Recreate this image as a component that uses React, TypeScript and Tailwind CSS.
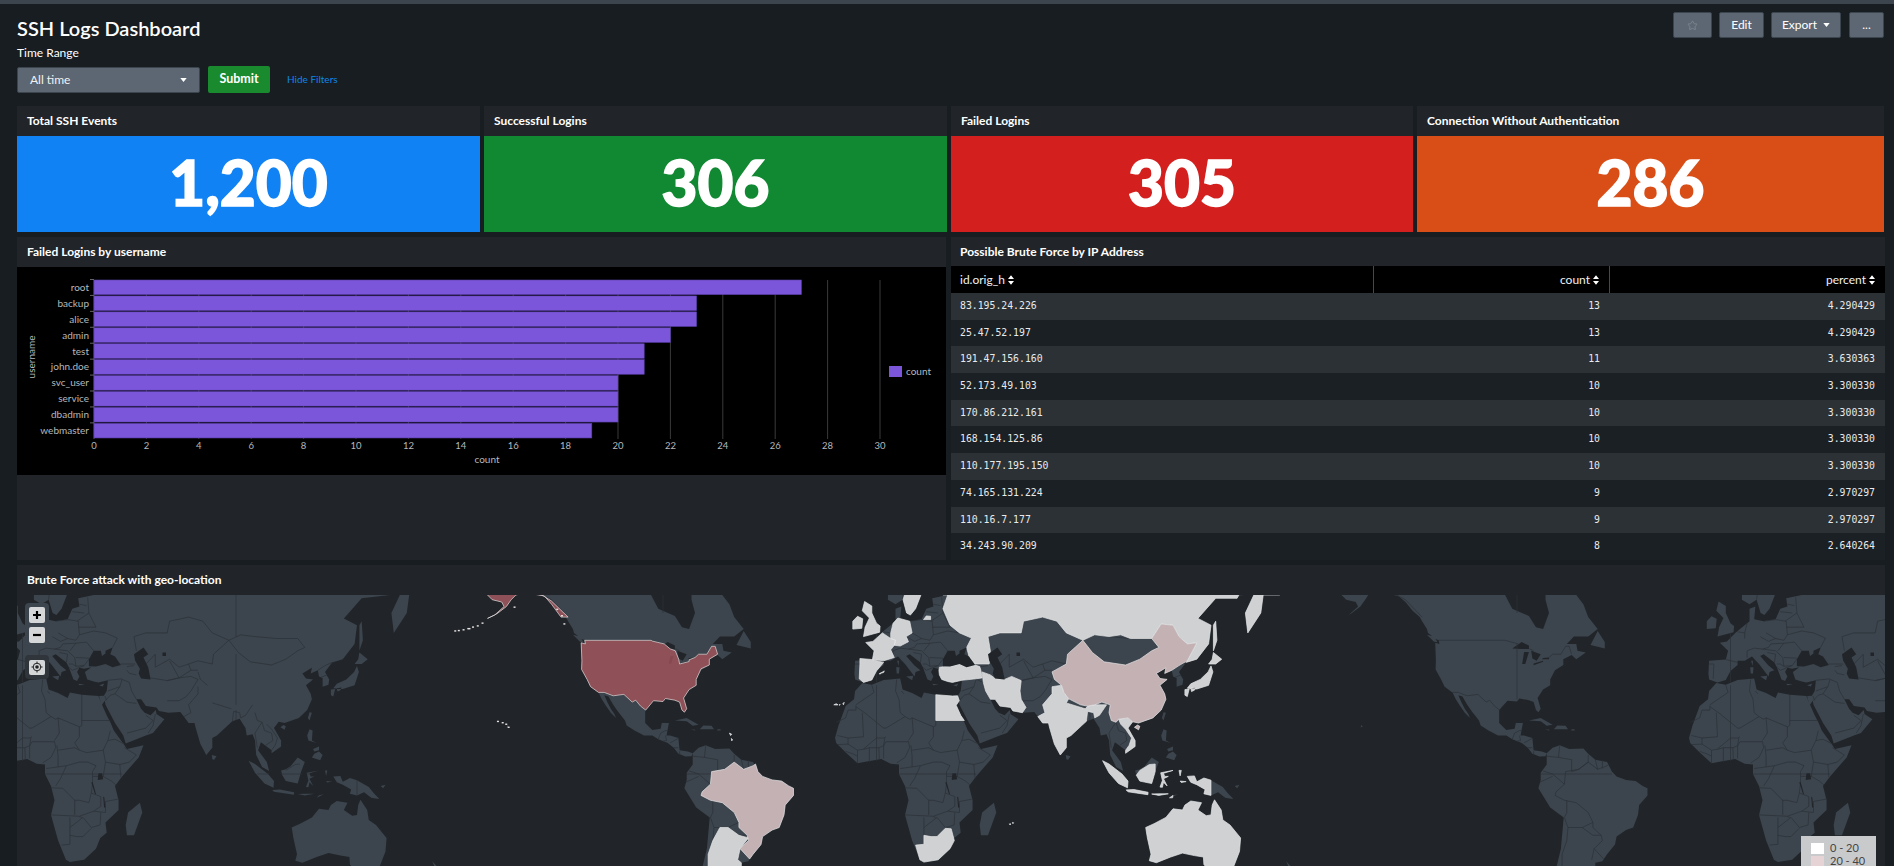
import { Star } from "lucide-react";

type Pt = [number, number];
const WORLD = 854;
const px = (lng: number) => 449.5 + (lng + 180) * (WORLD / 360);
const py = (lat: number) => 774 - 135.9 * Math.log(Math.tan(Math.PI / 4 + (lat * Math.PI) / 360));
const path = (pts: Pt[], close = true) =>
  "M" + pts.map(([a, b]) => `${px(a).toFixed(1)} ${py(b).toFixed(1)}`).join("L") + (close ? "Z" : "");

const land: Pt[][] = [
  // North America
  [[-170,72],[-166,62],[-165,60.5],[-162,59],[-158,58.5],[-157,57.5],[-161,55.5],[-164,54.7],[-160,55.8],[-156,57.5],[-154,59],[-152,60.5],[-150,60],[-148,60.5],[-145,60.3],[-140,59.8],[-137,58.5],[-134,56.5],[-131,55],[-130,54],[-128,52],[-127.5,51],[-124,49.3],[-123,49],[-122.7,48],[-124.5,48.3],[-124.2,43],[-124.3,40.3],[-122,37],[-120.5,34.5],[-117.2,32.5],[-115.8,30],[-114,27.5],[-112,25],[-109.8,23],[-110.5,24.5],[-112,26.5],[-113.5,29],[-114.7,31.5],[-113,31],[-111,28],[-109,25.5],[-106,22],[-105.3,20],[-102,18],[-98,16],[-94.5,16],[-92,14.5],[-88,13],[-85.5,11],[-83.5,8.5],[-80.5,7.3],[-78,7.5],[-77.5,8.7],[-79.5,9.5],[-83,10],[-83.5,15],[-87,16],[-88.5,16],[-87.5,21],[-90.5,21],[-91,18.7],[-94.5,18.2],[-97.5,21],[-97.5,26],[-94,29.5],[-90,29.2],[-89,30.3],[-85,29.7],[-83,29],[-82,26],[-81,25.2],[-80,26.5],[-81.3,30.5],[-79,33.5],[-76,35],[-76,37],[-74,40],[-70.5,41.7],[-70.5,43.5],[-67,44.8],[-65,43.5],[-61,45.5],[-64.5,46],[-65,48],[-69,48],[-66,50],[-60,50],[-56,52],[-60,55],[-62,58],[-65,60],[-70,61],[-78,62],[-78,59],[-76.5,56],[-79,52],[-82,52.5],[-85,55.3],[-92,57],[-95,60],[-94,62],[-100,72]],
  // South America
  [[-77.5,8.7],[-75,11],[-72,12],[-68,10.5],[-62,10.7],[-60,8.5],[-57,6],[-52,5],[-50,1],[-48,-1],[-44,-2.5],[-40,-3],[-37,-5],[-35,-6],[-35,-9],[-38.5,-13],[-39,-17],[-41,-22],[-44,-23],[-48,-25.5],[-48.7,-28.5],[-52,-32],[-54,-34.5],[-57,-35],[-57,-38],[-62,-39],[-72,-39],[-73.5,-37],[-71.5,-30],[-70.3,-18],[-76,-14],[-81,-6],[-80,-2.5],[-80,0.5],[-77.5,4],[-77.5,7]],
  // Africa
  [[-6,35.8],[-2,35.2],[3,36.8],[10,37.3],[11,33.5],[15,32.3],[19,30.5],[20,32.5],[25,31.7],[32,31.2],[32.5,30],[35.5,24],[37.2,21],[38.5,18],[43,12],[44,10.5],[51,12],[49,7],[42,-1],[39,-5],[40.5,-11],[40.5,-15],[35,-20],[35.5,-24],[32.8,-26],[31,-30],[26,-34],[20,-34.8],[18.3,-34],[15,-27],[12,-17],[13.5,-11],[12,-5],[9.5,0],[9.5,4],[6,4.3],[2,6.3],[-4,5.2],[-8,4.5],[-13,9],[-17,13],[-17.5,15],[-16,20],[-13,27.5],[-9.5,30],[-9,33]],
  // Eurasia
  [[-9,37],[-9.3,39],[-9,43],[-2,43.4],[-1,46],[-4.5,48.3],[-1.5,48.7],[2,51],[4,52],[8,54],[8,57],[10.5,57.5],[10,54.5],[14,54],[19,54.5],[21,57],[24,57.5],[23.5,59.3],[30,60],[23,60],[21.5,61],[21.5,70],[180,70],[180,65],[170,60],[163,60],[162,56],[156.5,51],[155.5,56],[160,61],[155,60],[143,59.3],[135.5,54.7],[141,53],[140,48],[135,43.5],[130.5,42.5],[127.5,39.5],[129.3,37],[129,35.2],[126.5,34.5],[126.5,37.5],[125,38],[124.5,40],[121.5,39],[122,40.8],[118,39],[119.5,37.3],[122.5,37],[119.5,35],[121.5,32],[122,30],[120,26],[116.5,23],[110.5,21],[108,21.5],[106,19],[109,14],[109,11.5],[105,8.7],[105,10],[100.5,13.3],[99.3,10],[103,5],[104,1.3],[101,3],[98.5,8],[98,14],[97,16.5],[94.5,16],[94,19],[91.5,22.7],[88.5,21.7],[86.5,20],[82,16],[80,15],[80,11],[77.5,8],[75,12.5],[73,19],[72.5,21],[70,21],[68,23.5],[66.5,25.3],[61.5,25],[57.5,25.7],[56.5,27],[52,27.5],[50,30],[48,30],[50,26.5],[51.5,25],[54,24],[56.2,26],[56.5,24.5],[59.8,22.5],[55,17],[52,16],[43.5,12.7],[42.5,16],[39,21],[35,28],[34.7,29.5],[33.5,28],[32.6,30],[32.3,31.2],[34.3,31.3],[35.5,33],[36,36.7],[32,36],[30,36.3],[27.3,37],[26.3,39.5],[29,41],[26,40.5],[24,40.8],[23,39.5],[24,38],[23,36.5],[21.5,37],[19.5,41],[18.5,42.5],[14,45],[12.5,44.5],[16,41.5],[18.5,40],[16.5,39.5],[16,38],[12,42],[9,44.3],[6,43],[3,43],[3,41.7],[0,39.8],[-2,36.8],[-5.5,36]],
  // Scandinavia
  [[4.8,59],[8,58],[11,59],[12.7,56],[14.3,55.5],[16.5,57],[18.7,60],[17.3,62],[21,66],[5,66]],
  // Islands
  [[-59,47.7],[-53,46.7],[-53,48.5],[-56,51.5]],
  [[-128,50.5],[-125,48.6],[-123.5,48.5],[-125,50]],
  [[-85,22],[-80,23],[-75,20.3],[-77.5,19.9],[-80,21.7]],
  [[-74.5,18.5],[-68.5,18.5],[-69.5,19.9],[-73,20]],
  [[-78.3,18.3],[-76.3,18],[-76.5,18.4]],
  [[-67.2,18],[-65.6,18],[-65.8,18.5],[-67,18.5]],
  [[49.5,-12],[50.5,-16],[47,-25],[44,-25],[43.5,-21],[44.5,-16]],
  [[-5.5,50],[1.3,51.2],[1.5,52.8],[0,53.5],[-2,56],[-2,57.6],[-5,58.6],[-6,56.5],[-3,54.8],[-4.8,52.5],[-5,51.7]],
  [[-10,52],[-6.2,52.2],[-5.8,54.6],[-8,55.2],[-10,54]],
  [[12.5,38],[15.5,38.2],[15,36.7]],
  [[8.3,41],[9.7,41],[9.5,39],[8.5,39]],
  [[8.7,43],[9.5,43],[9.3,41.4]],
  [[23.5,35.5],[26.3,35.3],[24,35]],
  [[32.3,35],[34.5,35.6],[33.8,34.6]],
  [[131,34],[135,33.7],[140,35],[141.8,39.5],[141,41.4],[139.8,39.5],[136.5,37],[132.5,35.5]],
  [[130,33.5],[131.8,33.7],[131,31],[130,31.5]],
  [[132.5,34],[134.5,34.2],[134,33.3],[132.8,32.8]],
  [[140,42],[143,42],[145.5,43.5],[142,45.5],[141.5,43.5]],
  [[142,46],[143.5,49],[143,54],[142,53]],
  [[120.3,23],[121,22],[122,25],[121,25.2]],
  [[108.7,19.3],[110.5,18.3],[111,19.7],[110,20.2]],
  [[120,16],[121,18.5],[122.3,18],[122,14],[124,13],[120.5,14]],
  [[122,7],[125.5,5.8],[126.5,8],[125,9.5],[123,8.5]],
  [[122.5,10.5],[125,11.5],[125,10],[123,9.5]],
  [[79.8,8],[81.8,7.5],[80.8,6],[80,6.2]],
  [[109,1.5],[111,2],[113,3.3],[116,7],[119,5],[117.5,1],[116,-4],[111,-3],[109.5,-0.5]],
  [[95.3,5.6],[98,4.2],[103.5,0],[106,-3],[105.8,-5.8],[102,-4],[98,0.5]],
  [[105.2,-6.7],[108.5,-6.5],[114.5,-7.7],[114.4,-8.7],[106,-7.5]],
  [[119.5,-5.5],[120.5,-2.8],[119.8,0.5],[125,1.5],[121,0.3],[121.5,-1],[123,-1],[121,-2],[122.5,-5],[121,-3.5],[120.5,-5.6]],
  [[131,-1],[134,-0.8],[135,-3.3],[138,-1.7],[141,-2.6],[146,-5.5],[148,-8],[150.5,-10.5],[147,-10],[144,-7.7],[141,-9],[138,-8.3],[138.5,-6.5],[135,-4.5],[132.5,-3.5]],
  [[116,-8.4],[119,-8.3],[123,-8.3],[119,-9]],
  [[124,-10],[127,-8.5],[125,-8.9]],
  [[127.5,1.5],[128.5,1.5],[128,-0.8]],
  [[128,-3],[130.5,-3.2],[128.5,-3.6]],
  [[113.5,-22],[114.2,-26],[115.7,-32],[115,-34.3],[118,-35],[124,-33],[129,-31.6],[134,-32.5],[137.8,-33],[138,-35.6],[140.5,-38],[146,-39],[150,-37.5],[153,-31],[153.5,-26],[149,-21],[146,-19],[145.3,-15],[142.5,-10.8],[141.5,-13],[141,-17],[139,-17.3],[135.5,-15],[137,-12],[132.5,-11.3],[130,-13],[129,-15],[125,-14.5],[122,-18],[117,-20.5]],
  [[172.7,-34.5],[175,-36.5],[174,-37]],
  [[151,-5],[153,-4.5],[152,-6]],
  [[-156,19.2],[-155,19.6],[-155.5,20.2]],
];

const lakes: Pt[][] = [
  [[-92,46.7],[-88,48.5],[-85,47.5],[-85,46.5],[-88,46.5]],
  [[-87.8,42],[-86.5,42],[-85,45.7],[-87,45.7]],
  [[-84,46],[-80,45],[-81.7,43],[-83.5,43.7]],
  [[-83,41.6],[-79,42.7],[-79,43],[-83,42.2]],
  [[-79.5,43.5],[-76.5,43.5],[-76.5,44],[-79,43.9]],
];

const water: Pt[][] = [
  [[28,41.3],[31,41.2],[35,42],[38,41],[41.5,41.7],[39,44.3],[37,45],[38,47],[35,46],[35,45.2],[33.5,44.5],[33,46],[30,46],[28,43.5]],
  [[47,45],[51,47],[53,45],[51,44],[53,41],[54,37],[50,37.3],[49,39],[49.5,40.5],[47.5,43]],
  [[59,45.5],[60.5,45.5],[60.5,44.5],[59,44.5]],
  [[31.7,-2.5],[34,-2.2],[33.5,0.3],[32,0.2]],
  [[29,-3.5],[29.6,-3.5],[31,-8.5],[30.5,-8.3]],
  [[34,-9.5],[34.5,-9.8],[34.9,-14],[34.4,-14]],
];

const borders: Pt[][] = [
  [[-141,60],[-141,70]],[[-130,55],[-137,59],[-141,60]],
  [[-123,49],[-95,49],[-89.5,48]],[[-84.8,46.6],[-83,46]],[[-76.5,44],[-75,45],[-71.5,45],[-69.5,47.3],[-68,47.3],[-67,45]],
  [[-97.3,26],[-99.5,27.5],[-101.5,29.7],[-103,29],[-106.5,31.8],[-111,31.3],[-114.8,32.5],[-117.2,32.5]],
  [[-92,14.5],[-91,17],[-89,18],[-88,18]],[[-89,16],[-88.5,14],[-90,13.7]],[[-83.3,15],[-87,13]],[[-85.5,11],[-83.5,11]],[[-83,9.5],[-83,8.2]],
  [[-72,12],[-72.5,7],[-67,6],[-67,1],[-64,2],[-60,5],[-60,8]],[[-79,1.3],[-75,0],[-70,-4.3]],[[-80.3,-3.4],[-75,-1]],[[-77.5,7.5],[-72.5,7]],
  [[-73.5,-7.5],[-70,-4.3],[-69.5,1],[-64,2],[-60,5],[-56,2],[-52,3.5],[-51,4.2]],[[-57,6],[-56,2]],[[-54,6],[-54,2.3]],
  [[-73.5,-7.5],[-74,-9],[-70,-11],[-65,-12],[-60,-16],[-58,-20],[-58,-22],[-54.5,-25],[-54,-27],[-57.5,-30],[-53.5,-33.7]],
  [[-69,-11],[-69,-16],[-70,-18],[-68.5,-22],[-69,-27],[-71,-32],[-71,-39]],[[-68.5,-22],[-66,-22],[-62.5,-22],[-58,-20]],[[-62.5,-22],[-58,-25],[-54.5,-25]],[[-57.5,-30],[-58.5,-34]],
  [[-8.7,27.7],[-8.7,26],[-12,26],[-13,23],[-17,21.3]],[[-2,35],[-1,32.5],[-8.7,28]],[[-8.7,27.3],[-5,25],[3,19],[4,19],[12,23.5]],[[8.5,37],[8,33],[9.5,30],[10,25],[12,23.5]],[[10.5,33],[11.5,32]],
  [[25,31.7],[25,20],[24,19.5],[24,15.5]],[[24,19.5],[15,23],[14,22.5],[12,23.5]],[[15,23],[15.5,17],[13.5,14]],[[25,22],[37,22]],[[24,15.5],[22,13],[24,10]],[[37,18],[36,14],[34,10],[35,5]],[[-12,15],[-5.5,15.5],[-6,25]],[[-16.5,16],[-12,15],[-12,12.5]],[[4,15.5],[3,15],[0,15],[-5.5,10.5]],
  [[-16.7,12.3],[-12,12.5],[-8,10],[-5,10.5],[-3,11],[1,11],[3,11.8],[3.5,15]],[[-3,5],[-3,11]],[[1.2,6],[1,11]],[[-8,4.5],[-8,10]],[[-13,9.5],[-10,8.5],[-8,7.5]],
  [[3,6.5],[3,11.8],[4,13.5],[13.5,13.5],[14,11],[12,7],[8.6,4.7]],[[14.5,12],[15,7.5],[15,3],[10,2.3]],[[15,3],[18.5,3.5],[24,5],[27.5,5],[31,3.5]],[[15,10],[22,11],[24,10]],[[24,10],[27,9],[34,10]],
  [[12,-5.8],[17,-6],[22,-11],[24,-11],[28,-12],[29,-8],[29.5,-4],[29.5,1],[31,3.5]],[[18.5,3.5],[16,-2],[14,-5]],[[34,-1],[37.5,-3],[39.5,-4.7]],[[34,-1],[35,5],[41,4],[41.5,-1.5]],[[41,4],[45,5],[48,8],[43,11]],[[36,14],[39,14.5],[43,12.5]],[[29.5,-1],[34,-1]],
  [[12,-17],[23.5,-17.5],[25,-18]],[[22,-11],[22,-17]],[[20,-18],[20,-22]],[[24,-17.5],[30,-15.5],[33,-13.5],[33,-9.5],[29,-8]],[[25.5,-18],[29,-22],[32.7,-21],[33,-16]],[[40.5,-10.5],[35,-11.5],[35,-16],[30,-15.5]],[[20,-22],[20,-25]],
  [[16.5,-28.7],[20,-28.4],[20,-25],[23,-25.5],[25.5,-25.5],[29,-22.3]],[[20,-22],[25.5,-18]],
  [[3,51.3],[6,51],[6,49.5]],[[7,53.5],[6,51]],[[14,54],[19,54.4],[23.5,54],[24,50.5],[22.5,49],[19,49.5],[15,51]],[[24,50.5],[30,51.5],[35,51],[40,49.6],[38,47]],[[22.5,48.2],[27,48.5],[30,46]],[[23,54],[28,56],[27.5,59.5]],[[21,56.3],[26,56]],[[24,58],[27,57.7]],[[23.5,52.5],[31,52.5],[28,56]],[[7,44],[7,46],[10,46.8],[13.5,46.5],[16,47],[17,48],[22.5,48.2]],[[12.5,50],[16,48.7],[19,49.5]],[[13.5,46.5],[19,46],[22,44],[22.5,41.3],[26,41.5],[28,43.5]],[[22.5,48.2],[20,46]],[[22.5,44],[28,43.8]],[[19.5,42],[21,42],[22.5,41.3]],[[19.5,41],[21,40],[26,41.5]],[[15.5,45.5],[19,45],[18.5,42.5]],[[-9,42],[-7,42],[-7.3,37.2]],[[-2,43.4],[3,42.5]],[[11,59],[12,63]],
  [[34.9,29.5],[37,31.5],[39,32],[44,29],[48,28.5]],[[52,24],[55,22],[52,19],[44,17]],[[39,32],[41,34.5],[42,37],[45,36],[46,33],[48,30]],[[36,33],[41,34.5]],[[36,36.7],[42,37.2]],[[56,24.5],[55,20],[53,17]],[[34.7,31.2],[35.5,29.6]],
  [[52,42],[56,45],[56,41],[62,43.5],[66,41],[70,42],[74,43],[80,42]],[[54,37.5],[61,36.6],[66,37.5],[62,43]],[[61,36.6],[66,37.5],[71,38],[74,37],[71,33],[69,31],[66,29.5],[61,29.5]],[[66,37.5],[71,40],[74,40]],[[70,42],[71,40]],
  [[80,42],[80.5,45],[87,49],[80,51],[76,54],[70,55],[62,54],[61,51],[52,51],[47,50],[48,46]],[[87,49],[92,50.5],[98,50],[107,49.5],[116,49.5],[119,47],[116,46],[111,43.5],[105,41.7],[96,42.7],[91,45.5],[87,49]],
  [[74,39.5],[75,37],[78,35]],[[68,23.5],[71,25],[70,28],[74,32],[74,34.5]],[[80,28.7],[88,26.5]],[[92,23],[94,24],[97,28]],[[98,25],[99,22],[101,21.3],[100,20],[98,17],[99,11]],[[101,21.3],[102,18],[105,17],[105.5,14],[102.5,12]],[[103,20.5],[105,18.5],[107.5,15],[106.5,12],[105,10]],[[88.5,21.7],[89,25.5],[91.5,25],[92,23]],[[124.5,40],[127.5,41.5],[130.5,42.5]],[[126,37.8],[128.5,38.5]],[[41.5,42],[47.5,42]],[[44,40],[45,39],[48,38.5]],[[44,41.2],[47,41.5]],
  [[111,1.5],[115,4],[117,4.2]],[[141,-2.6],[141,-9]],
  [[90,60],[90,50]],[[90,45],[90,28]],[[90,26],[90,22]],[[-90,60],[-90,56]],[[-90,48],[-90,30]],[[0,51],[0,36]],[[0,35],[0,5.5]],[[9.5,0],[42,0]],[[-80,0],[-50,0]],[[99,0],[104,0]],[[109,0],[118,0]],[[119.7,0],[121,0]],
];

const grey: Pt[][] = [
  [[21.5,70],[28,70],[28,60],[30,60],[28,57],[31,53],[35,51],[40,49.6],[38,47],[39,44.3],[41.5,42],[47.5,42],[48,46],[47,50],[52,51],[61,51],[62,54],[70,55],[76,54],[80,51],[87,49],[92,50.5],[98,50],[103,50.5],[107,49.5],[116,49.5],[120,53.3],[125,53],[127.5,50],[131,48],[135,48.3],[131,43],[130.5,42.5],[135,43.5],[140,48],[141,53],[135.5,54.7],[143,59.3],[152,59.3],[155,62],[135,70]],
  [[160,61],[155.5,56],[156.5,51],[162,56],[163,60],[170,60],[180,65],[180,70],[150,70]],
  [[142,46],[143.5,49],[143,54],[142,53]],
  [[19.8,54.4],[22.8,54.4],[22.8,55.2],[21,55.3]],
  [[6,51],[7,53.5],[9,54.8],[14,54],[15,51],[12.5,50],[13.5,48.6],[10,47.4],[7.5,47.6],[8,49],[6,49.5]],
  [[-4.5,48.4],[-1.5,48.7],[2.5,51],[6,49.5],[8,49],[7.5,47.6],[6,46.3],[7.5,44],[3,43],[-1.7,43.4],[-1,46]],
  [[-7,43.7],[-2,43.4],[3,42.5],[0,39.8],[-2,36.8],[-5.5,36],[-7.3,37.2],[-7,42]],
  [[11.2,59],[12.7,56],[14.3,55.5],[16.5,57],[18.7,60],[17.3,62],[13,62]],
  [[-5.5,50],[1.3,51.2],[1.5,52.8],[0,53.5],[-2,56],[-2,57.6],[-5,58.6],[-6,56.5],[-3,54.8],[-4.8,52.5],[-5,51.7]],
  [[-10,52],[-6.2,52.2],[-5.8,54.6],[-8,55.2],[-10,54]],
  [[1.5,39],[3.3,39.8],[3,39.3]],[[1.2,38.9],[1.6,39.1],[1.5,38.7]],
  [[-18,28],[-17,28.4],[-16.2,28],[-16.8,27.9]],[[-15.8,28],[-15.3,28.1],[-15.5,27.8]],[[-14.2,28.4],[-13.6,28.9],[-13.9,28]],
  [[26.3,40],[26.5,38.5],[27.5,37],[30,36.3],[32,36],[36,36.7],[42,37.2],[44.5,37.5],[44,40],[43.5,41.2],[41.5,41.7],[38,41],[35,42],[31,41.2],[29,41.2],[26.5,41]],
  [[44.5,39.5],[48,38.5],[50,37.3],[54,37],[57,38],[61,36.6],[60.5,33],[61,30],[63,27],[61.5,25],[57.5,25.7],[56.5,27],[52,27.5],[50,30],[48,30],[46,33],[45,36]],
  [[74,34.5],[78,35],[79,32.5],[81,30.2],[80,28.7],[88,26.5],[89,27.5],[92,28],[97,28],[94,24],[92,23],[91.5,25],[89,25.5],[88.5,21.7],[86.5,20],[82,16],[80,15],[80,11],[77.5,8],[75,12.5],[73,19],[72.5,21],[70,21],[68,23.5],[71,25],[70,28],[74,32]],
  [[25,31.7],[32,31.2],[34.2,31.3],[34.9,29.5],[33.6,27.8],[35.5,24],[37,22],[25,22]],
  [[16.5,-28.7],[20,-28.4],[20,-25],[23,-25.5],[25.5,-25.5],[29,-22.3],[31.5,-22.5],[32.8,-27],[31,-30],[26,-34],[20,-34.8],[18.3,-34]],
  [[-66,-22],[-62.5,-22],[-58,-25],[-54,-26],[-57.5,-30],[-58.5,-34],[-57,-35],[-57,-38],[-62,-39],[-71,-39],[-71,-32],[-69,-27]],
  [[102,22.5],[106,23],[108,21.5],[106,19],[109,14],[109,11.5],[105,8.7],[105,10],[106.5,12],[107.5,15],[105,18.5],[103,20.5]],
  [[131,34],[135,33.7],[140,35],[141.8,39.5],[141,41.4],[139.8,39.5],[136.5,37],[132.5,35.5]],
  [[130,33.5],[131.8,33.7],[131,31],[130,31.5]],
  [[132.5,34],[134.5,34.2],[134,33.3],[132.8,32.8]],
  [[140,42],[143,42],[145.5,43.5],[142,45.5],[141.5,43.5]],
  [[95.3,5.6],[98,4.2],[103.5,0],[106,-3],[105.8,-5.8],[102,-4],[98,0.5]],
  [[105.2,-6.7],[108.5,-6.5],[114.5,-7.7],[114.4,-8.7],[106,-7.5]],
  [[109.5,-0.5],[111,1.5],[115,4],[117.5,4.2],[117.5,1],[116,-4],[111,-3]],
  [[119.5,-5.5],[120.5,-2.8],[119.8,0.5],[125,1.5],[121,0.3],[121.5,-1],[123,-1],[121,-2],[122.5,-5],[121,-3.5],[120.5,-5.6]],
  [[131,-1],[134,-0.8],[135,-3.3],[138,-1.7],[141,-2.6],[141,-9],[138,-8.3],[138.5,-6.5],[135,-4.5],[132.5,-3.5]],
  [[116,-8.4],[119,-8.3],[123,-8.3],[119,-9]],
  [[123.5,-10],[125,-9],[124.8,-10]],
  [[127.5,1.5],[128.5,1.5],[128,-0.8]],
  [[128,-3],[130.5,-3.2],[128.5,-3.6]],
  [[113.5,-22],[114.2,-26],[115.7,-32],[115,-34.3],[118,-35],[124,-33],[129,-31.6],[134,-32.5],[137.8,-33],[138,-35.6],[140.5,-38],[146,-39],[150,-37.5],[153,-31],[153.5,-26],[149,-21],[146,-19],[145.3,-15],[142.5,-10.8],[141.5,-13],[141,-17],[139,-17.3],[135.5,-15],[137,-12],[132.5,-11.3],[130,-13],[129,-15],[125,-14.5],[122,-18],[117,-20.5]],
  [[-62,17],[-61.5,16],[-61,16.5]],[[-61.2,14.8],[-61,13.8],[-60.7,14.4]],
  [[56,-20.6],[56.5,-20.5],[56.4,-21]],[[57.3,-20],[57.8,-20.1],[57.5,-20.5]],
];

const pink: Pt[][] = [
  [[74,39.5],[80,42],[80.5,45],[87,49],[91,45.5],[96,42.7],[105,41.7],[111,43.5],[116,46],[119,47],[116,49.5],[120,53.3],[125,53],[127.5,50],[131,48],[135,48.3],[131,43],[127.5,41.5],[124.5,40],[121.5,39],[122,40.8],[118,39],[119.5,37.3],[122.5,37],[119.5,35],[121.5,32],[122,30],[120,26],[116.5,23],[110.5,21],[108,21.5],[106,23],[102,22.5],[101,21.3],[99,22],[98,25],[98.5,28],[95,29],[92,28],[89,27.5],[86,28],[81,30.2],[79,32.5],[78,35],[75,37]],
  [[108.7,19.3],[110.5,18.3],[111,19.7],[110,20.2]],
  [[-73.5,-7.5],[-70,-4.3],[-69.5,1],[-64,2],[-60,5],[-56,2],[-52,3.5],[-51,4.2],[-50,1],[-48,-1],[-44,-2.5],[-40,-3],[-37,-5],[-35,-6],[-35,-9],[-38.5,-13],[-39,-17],[-41,-22],[-44,-23],[-48,-25.5],[-48.7,-28.5],[-52,-32],[-53.5,-33.7],[-57.5,-30],[-54,-27],[-54.5,-25],[-58,-22],[-58,-20],[-60,-16],[-65,-12],[-70,-11],[-74,-9]],
];

const usa: Pt[][] = [
  [[-123,49],[-95,49],[-94.6,48.8],[-89.5,48],[-87,46.6],[-84.8,46],[-83.4,43.5],[-83,42],[-79,42.8],[-79,43.3],[-76.5,44],[-75,45],[-71.5,45],[-69.5,47.3],[-68,47.3],[-67,45],[-70.5,43.5],[-70.5,41.7],[-74,40.5],[-76,37],[-76,35],[-79,33.5],[-81.3,30.5],[-80,26.5],[-81,25.2],[-82,26],[-83,29],[-85,29.7],[-89,30.3],[-90,29.2],[-94,29.5],[-97.3,26],[-99.5,27.5],[-101.5,29.7],[-103,29],[-106.5,31.8],[-111,31.3],[-114.8,32.5],[-117.2,32.5],[-120.5,34.5],[-122,37],[-124.3,40.3],[-124.2,43],[-124.5,48.3],[-122.7,48]],
  [[-168,66],[-141,66],[-141,60],[-137,58.7],[-130,55],[-133,55],[-137,58],[-140,59.8],[-148,60.5],[-152,60],[-154,59],[-156,57.5],[-160,55.8],[-164,54.7],[-161,55.5],[-157,57.5],[-158,58.5],[-162,59],[-165,60.5]],
];

const dots: Pt[] = [[-166.5,53.7],[-168.5,53],[-170.5,52.7],[-172.5,52.3],[-174.5,52],[-176.5,51.8],[-178,51.7],[-172,52.3],[-153,57.5],[-160,21.9],[-158,21.4],[-156.5,20.8],[-155.5,19.6],[-133,55.5],[-135,57],[-132,53.5]];

const bars: [string, number][] = [["root",27],["backup",23],["alice",23],["admin",22],["test",21],["john.doe",21],["svc_user",20],["service",20],["dbadmin",20],["webmaster",19]];
const rows: [string, string, string][] = [
  ["83.195.24.226","13","4.290429"],["25.47.52.197","13","4.290429"],["191.47.156.160","11","3.630363"],["52.173.49.103","10","3.300330"],["170.86.212.161","10","3.300330"],["168.154.125.86","10","3.300330"],["110.177.195.150","10","3.300330"],["74.165.131.224","9","2.970297"],["110.16.7.177","9","2.970297"],["34.243.90.209","8","2.640264"],
];
const stats = [
  { t: "Total SSH Events", v: "1,200", c: "bg-[#1182f3]" },
  { t: "Successful Logins", v: "306", c: "bg-[#118832]" },
  { t: "Failed Logins", v: "305", c: "bg-[#d41f1f]" },
  { t: "Connection Without Authentication", v: "286", c: "bg-[#d94e17]" },
];

const Caret = ({ className }: { className: string }) => (
  <svg viewBox="0 0 8 5" className={className}><path d="M0 0h8L4 5z" fill="currentColor" /></svg>
);
const Sort = () => (
  <svg viewBox="0 0 7 11" className="w-[6px] h-[10px] ml-[3px] text-white"><path d="M3.5 0L7 4.2H0zM3.5 11L0 6.8h7z" fill="currentColor" /></svg>
);
const PanelTitle = ({ children }: { children: string }) => (
  <div className="h-[30px] flex items-center px-[10px] text-[12px] font-bold text-white">{children}</div>
);

function Chart() {
  const x0 = 94, u = 26.2;
  const ticks = Array.from({ length: 16 }, (_, i) => i * 2);
  return (
    <svg className="block w-full h-[208px] bg-black" viewBox="0 0 929 208" fontFamily="Lato, sans-serif">
      {ticks.slice(1).map((t) => (
        <line key={t} x1={x0 + t * u - 17} x2={x0 + t * u - 17} y1={13} y2={172} stroke="#3a3a3a" />
      ))}
      <line x1={77} x2={77} y1={13} y2={172} stroke="#555" />
      {bars.map(([n, v], i) => {
        const y = 13 + i * 15.93;
        return (
          <g key={n}>
            <line x1={73} x2={77} y1={y - 0.5} y2={y - 0.5} stroke="#666" />
            <rect x={77} y={y} width={v * u} height={14.6} fill="#7b56db" stroke="#5a3fa6" strokeWidth={0.6} />
            <text x={72} y={y + 10.8} textAnchor="end" fontSize={10} fill="#b5b9bd">{n}</text>
          </g>
        );
      })}
      {ticks.map((t) => (
        <text key={t} x={x0 + t * u - 17} y={182} textAnchor="middle" fontSize={9.5} fill="#b5b9bd">{t}</text>
      ))}
      <text x={470} y={196} textAnchor="middle" fontSize={10} fill="#b5b9bd">count</text>
      <text transform="translate(18 90) rotate(-90)" textAnchor="middle" fontSize={10} fill="#b5b9bd">username</text>
      <rect x={872} y={99} width={13} height={11} fill="#7b56db" />
      <text x={889} y={108} fontSize={10} fill="#b5b9bd">count</text>
    </svg>
  );
}

function WorldMap() {
  const copies = [-WORLD, 0, WORLD];
  const base = (
    <g>
      <path d={land.map((p) => path(p)).join("")} fill="#3c444d" />
      <path d={lakes.map((p) => path(p)).join("")} fill="#212529" />
      <path d={borders.map((p) => path(p, false)).join("")} fill="none" stroke="#2b3137" strokeWidth={0.7} />
    </g>
  );
  return (
    <svg className="block w-full h-full" viewBox="17 595 1868 271" preserveAspectRatio="xMinYMin slice">
      <rect x={17} y={595} width={1868} height={271} fill="#212529" />
      {copies.map((o) => (
        <g key={o} transform={`translate(${o} 0)`}>{base}</g>
      ))}
      <path d={grey.map((p) => path(p)).join("")} fill="#d0d1d3" stroke="#e4e5e6" strokeWidth={0.7} />
      <path d={pink.map((p) => path(p)).join("")} fill="#c4b1b4" stroke="#e4e5e6" strokeWidth={0.7} />
      <path d={usa.map((p) => path(p)).join("")} fill="#8f5057" stroke="#e0dcdc" strokeWidth={0.7} />
      <path d={path([[-87.6,42.2],[-86.6,42.2],[-85.6,44.5],[-86.8,44.5]])} fill="#85494f" />
      {dots.map(([a, b], i) => (
        <rect key={i} x={px(a)} y={py(b)} width={2} height={1.4} fill="#e8e4e4" />
      ))}
      {copies.map((o) => (
        <path key={o} transform={`translate(${o} 0)`} d={water.map((p) => path(p)).join("")} fill="#212529" />
      ))}
    </svg>
  );
}

export default function App() {
  return (
    <div className="h-[866px] overflow-hidden flex flex-col bg-[#171d21] text-white font-['Lato',sans-serif]">
      <div className="h-1 shrink-0 bg-[#3c444d]" />
      <div className="flex justify-between pl-[17px] pr-[10px] pt-[6px] h-[102px] shrink-0">
        <div>
          <div className="h-[36px] flex items-center text-[20px] font-semibold leading-none">SSH Logs Dashboard</div>
          <div className="h-[14px] flex items-center text-[12px]">Time Range</div>
          <div className="mt-[6px] flex items-center">
            <div className="w-[183px] h-[26px] bg-[#5c6773] border border-[#3c444d] rounded-[2px] flex items-center justify-between pl-[12px] pr-[12px] text-[12px] text-[#f0f1f2]">
              <span>All time</span>
              <Caret className="w-[7px] h-[4px] text-white" />
            </div>
            <div className="ml-[8px] w-[62px] h-[27px] bg-[#1a8a2e] rounded-[2px] flex items-center justify-center text-[12.5px] font-bold">Submit</div>
            <div className="ml-[17px] text-[10px] text-[#0f86ea]">Hide Filters</div>
          </div>
        </div>
        <div className="pt-[2px] flex items-start gap-[7px] text-[12px]">
          <div className="w-[39px] h-[26px] bg-[#5c6773] border border-[#3c444d] rounded-[2px] flex items-center justify-center">
            <Star size={11} className="text-[#7d868f]" />
          </div>
          <div className="w-[45px] h-[26px] bg-[#5c6773] border border-[#3c444d] rounded-[2px] flex items-center justify-center">Edit</div>
          <div className="w-[70px] h-[26px] bg-[#5c6773] border border-[#3c444d] rounded-[2px] flex items-center justify-center gap-[6px]">
            <span>Export</span>
            <Caret className="w-[7px] h-[4px] text-white" />
          </div>
          <div className="ml-[1px] w-[35px] h-[26px] bg-[#5c6773] border border-[#3c444d] rounded-[2px] flex items-center justify-center">...</div>
        </div>
      </div>

      <div className="pl-[17px] pr-[9px] flex flex-col gap-[5px] flex-1 min-h-0">
        <div className="grid grid-cols-[463px_463px_462px_467px] gap-[4px] h-[126px] shrink-0">
          {stats.map((s) => (
            <div key={s.t} className="bg-[#212529] flex flex-col">
              <PanelTitle>{s.t}</PanelTitle>
              <div className={`${s.c} flex-1 flex items-center justify-center pb-[4px] text-[62px] font-black leading-none [-webkit-text-stroke:1.5px_white]`}>{s.v}</div>
            </div>
          ))}
        </div>

        <div className="grid grid-cols-[929px_934px] gap-[5px] h-[323px] shrink-0">
          <div className="bg-[#212529]">
            <PanelTitle>Failed Logins by username</PanelTitle>
            <Chart />
          </div>
          <div className="bg-[#212529] overflow-hidden">
            <div className="h-[29px] flex items-center px-[9px] text-[12px] font-bold">Possible Brute Force by IP Address</div>
            <div className="grid grid-cols-[423px_236px_1fr] h-[27px] bg-black text-[12px] text-[#f0f1f2]">
              <div className="flex items-center px-[9px] border-r border-[#43494f]">id.orig_h<Sort /></div>
              <div className="flex items-center justify-end px-[10px] border-r border-[#43494f]">count<Sort /></div>
              <div className="flex items-center justify-end px-[10px]">percent<Sort /></div>
            </div>
            {rows.map((r, i) => (
              <div key={r[0]} className={`grid grid-cols-[423px_236px_1fr] h-[26.7px] items-center text-[9.8px] text-[#e8eaeb] font-['DejaVu_Sans_Mono',monospace] ${i % 2 === 0 ? "bg-[#2c3135]" : "bg-[#1b2025]"}`}>
                <div className="px-[9px]">{r[0]}</div>
                <div className="px-[10px] text-right">{r[1]}</div>
                <div className="px-[10px] text-right">{r[2]}</div>
              </div>
            ))}
          </div>
        </div>

        <div className="bg-[#212529] flex-1 min-h-0 flex flex-col">
          <PanelTitle>Brute Force attack with geo-location</PanelTitle>
          <div className="relative flex-1 min-h-0 overflow-hidden">
            <WorldMap />
            <div className="absolute left-[8px] top-[8px] w-[24px] h-[43px] bg-[#3c444d] rounded-[4px] flex flex-col items-center justify-center gap-[4px]">
              <div className="w-[16px] h-[16px] bg-[#d5d6d8] rounded-[2px] flex items-center justify-center text-black">
                <svg viewBox="0 0 10 10" className="w-[10px] h-[10px]"><path d="M5 1v8M1 5h8" stroke="currentColor" strokeWidth="2.2" /></svg>
              </div>
              <div className="w-[16px] h-[16px] bg-[#d5d6d8] rounded-[2px] flex items-center justify-center text-black">
                <svg viewBox="0 0 10 10" className="w-[10px] h-[10px]"><path d="M1 5h8" stroke="currentColor" strokeWidth="2.2" /></svg>
              </div>
            </div>
            <div className="absolute left-[8px] top-[60px] w-[24px] h-[24px] bg-[#2f353b] rounded-[4px] flex items-center justify-center">
              <div className="w-[16px] h-[15px] bg-[#d5d6d8] rounded-[2px] flex items-center justify-center text-[#222]">
                <svg viewBox="0 0 12 12" className="w-[12px] h-[12px]"><circle cx="6" cy="6" r="3.8" fill="none" stroke="currentColor" /><circle cx="6" cy="6" r="1.8" fill="currentColor" /><path d="M6 .5v2M6 9.500v2M.5 6h2M9.500 6h2" stroke="currentColor" /></svg>
              </div>
            </div>
            <div className="absolute left-[1784px] top-[241px] w-[75px] h-[40px] bg-[#c9cacc] text-[#444] text-[11px]">
              <div className="flex items-center h-[13px] mt-[6px] pl-[10px] gap-[6px]"><span className="w-[13px] h-[11px] bg-white" /><span>0 - 20</span></div>
              <div className="flex items-center h-[13px] pl-[10px] gap-[6px]"><span className="w-[13px] h-[11px] bg-[#e6d3d5]" /><span>20 - 40</span></div>
            </div>
          </div>
        </div>
      </div>
    </div>
  );
}
